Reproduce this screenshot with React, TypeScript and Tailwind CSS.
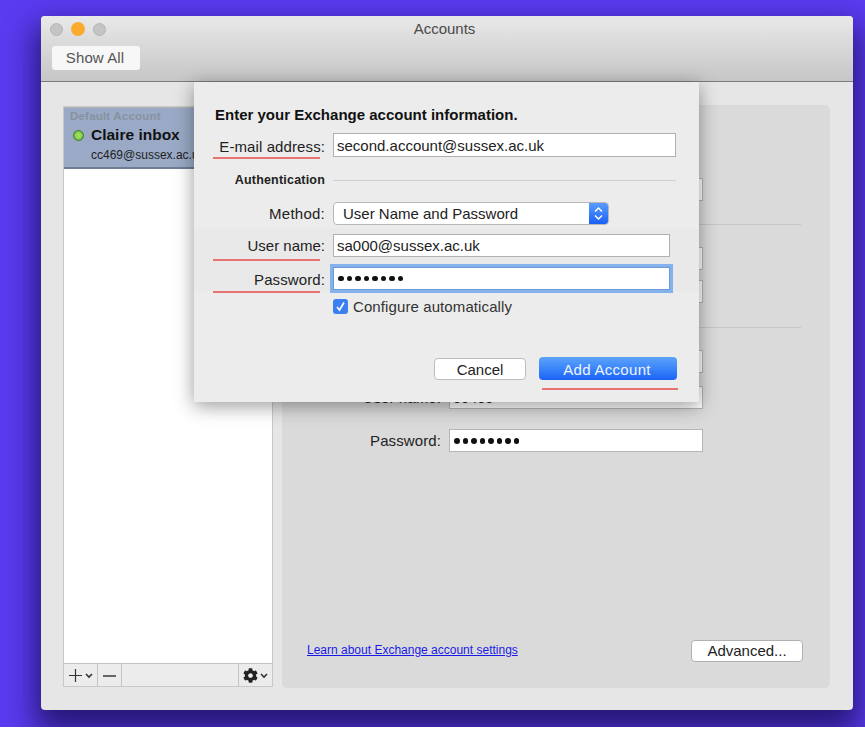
import { FaCog } from "react-icons/fa";

const font = "font-['Liberation_Sans',Arial,sans-serif]";

function BgField({ label, value, dots }: { label?: string; value?: string; dots?: boolean }) {
  return (
    <div className="flex items-center h-[23px]">
      <div className="w-[167px] pr-[8px] pt-[2px] text-right text-[15px] tracking-[0.1px] text-[#222] whitespace-nowrap">{label}</div>
      <div className="w-[254px] h-[23px] bg-white border border-[#b5b5b5] pl-[3px] pt-[1px] flex items-center text-[14.5px] text-[#222] leading-none">
        {dots ? <Dots /> : value}
      </div>
    </div>
  );
}

function Dots() {
  return (
    <span className="flex gap-[3px] pl-[1px]">
      {[0, 1, 2, 3, 4, 5, 6, 7].map((i) => (
        <span key={i} className="w-[5.5px] h-[5.5px] rounded-full bg-[#111]" />
      ))}
    </span>
  );
}

function RedLine({ className }: { className: string }) {
  return <div className={"absolute h-[2px] bg-[#e77272] " + className} />;
}

function Dialog() {
  return (
    <div className="absolute left-[153px] top-[66px] w-[505px] h-[320px] bg-[#ececec] shadow-[0_4px_18px_rgba(0,0,0,0.4)] flex flex-col">
      <div className="pl-[21px] pt-[24px] h-[51px] text-[15px] font-bold text-[#111] leading-[18px]">
        Enter your Exchange account information.
      </div>
      <div className="flex items-center h-[24px]">
        <div className="w-[131px] pt-[2px] text-right text-[15px] tracking-[0.1px] text-[#222] leading-none whitespace-nowrap">E-mail address:</div>
        <div className="ml-[8px] w-[343px] h-[24px] bg-white border border-[#b0b0b0] pl-[3px] pt-[3px] flex items-center text-[15px] text-[#222]">
          second.account@sussex.ac.uk
        </div>
      </div>
      <div className="flex items-center h-[22px] mt-[12px]">
        <div className="w-[131px] text-right text-[12.5px] font-bold text-[#222] tracking-[0.2px]">Authentication</div>
        <div className="ml-[8px] w-[343px] h-px bg-[#cfcfcf]" />
      </div>
      <div className="flex items-center h-[23px] mt-[11px]">
        <div className="w-[131px] pt-[2px] text-right text-[15px] tracking-[0.25px] text-[#222]">Method:</div>
        <div className="ml-[8px] w-[276px] h-[23px] flex rounded-[4px] bg-white border border-[#b8b8b8] overflow-hidden">
          <div className="flex-1 pl-[9px] pt-[1px] flex items-center text-[15px] text-[#222]">User Name and Password</div>
          <div className="w-[19px] bg-gradient-to-b from-[#5a9cfb] to-[#1a5ff5] flex items-center justify-center">
            <svg width="9" height="15" viewBox="0 0 9 15" fill="none" stroke="#fff" strokeWidth="1.5">
              <path d="M1 5.5 4.5 2 8 5.5M1 9.5 4.5 13 8 9.5" />
            </svg>
          </div>
        </div>
      </div>
      <div className="bg-[#e9e9e9] mt-[3px] h-[64px] pt-[6px]">
        <div className="flex items-center h-[23px]">
          <div className="w-[131px] pt-[2px] text-right text-[15px] text-[#222]">User name:</div>
          <div className="ml-[8px] w-[337px] h-[23px] bg-white border border-[#b0b0b0] pl-[3px] pt-[2px] flex items-center text-[15px] text-[#222]">
            sa000@sussex.ac.uk
          </div>
        </div>
        <div className="flex items-center h-[23px] mt-[10px]">
          <div className="w-[131px] pt-[3px] text-right text-[15px] tracking-[0.1px] text-[#222]">Password:</div>
          <div className="ml-[8px] w-[337px] h-[23px] bg-white border border-[#6d9bd6] shadow-[0_0_0_3px_#84b2ec] pl-[3px] flex items-center">
            <Dots />
          </div>
        </div>
      </div>
      <div className="flex items-center h-[18px] mt-[5px] ml-[139px]">
        <div className="w-[15px] h-[15px] rounded-[3px] bg-[#3b7ff0] flex items-center justify-center">
          <svg width="11" height="11" viewBox="0 0 11 11" fill="none" stroke="#fff" strokeWidth="1.6">
            <path d="M2 6 4.5 9 9 1.5" />
          </svg>
        </div>
        <span className="ml-[5px] pt-[2px] text-[15px] tracking-[0.1px] text-[#333]">Configure automatically</span>
      </div>
      <div className="flex justify-end items-end h-[23px] mt-[42px] pr-[22px] gap-[13px]">
        <div className="w-[92px] h-[22px] rounded-[4px] bg-white border border-[#bdbdbd] pt-[2px] flex items-center justify-center text-[15px] text-[#222]">
          Cancel
        </div>
        <div className="w-[138px] h-[23px] rounded-[4px] bg-gradient-to-b from-[#5da3fb] to-[#1a63f6] pt-[4px] pr-[2px] flex items-center justify-center text-[15px] tracking-[0.3px] text-[#eef4ff]">
          Add Account
        </div>
      </div>
      <RedLine className="left-[19px] top-[75px] w-[107px]" />
      <RedLine className="left-[19px] top-[177px] w-[107px]" />
      <RedLine className="left-[19px] top-[209px] w-[107px]" />
      <RedLine className="left-[348px] top-[306px] w-[136px]" />
    </div>
  );
}

export default function App() {
  return (
    <div className={"relative w-[865px] h-[729px] overflow-hidden bg-white " + font}>
      <div className="h-[727px] overflow-hidden bg-[#5b3bf0] pl-[41px] pt-[16px]">
        <div className="relative w-[812px] h-[694px] rounded-[4px] bg-[#e6e6e6] shadow-[0_16px_30px_6px_rgba(20,10,70,0.72)] flex flex-col overflow-hidden">
          <div className="h-[66px] shrink-0 bg-gradient-to-b from-[#e9e9e9] to-[#c6c6c6] border-b border-[#7c7c7c] relative">
            <div className="flex items-center gap-[8px] pl-[9px] pt-[6px]">
              <div className="w-[13px] h-[13px] rounded-full bg-[#c4c4c4] border border-[#b4b4b4]" />
              <div className="w-[14px] h-[14px] rounded-full bg-[#fbab2c]" />
              <div className="w-[13px] h-[13px] rounded-full bg-[#c4c4c4] border border-[#b4b4b4]" />
            </div>
            <div className="absolute left-0 right-0 top-[2px] pr-[5px] text-center text-[15px] text-[#4a4a4a]">Accounts</div>
            <div className="ml-[11px] mt-[10px] w-[88px] h-[24px] rounded-[3px] bg-[#f7f7f7] pr-[2px] flex items-center justify-center text-[15px] tracking-[0.1px] text-[#555]">
              Show All
            </div>
          </div>
          <div className="flex-1 flex pl-[22px] pt-[23px] min-h-0">
            <div className="w-[210px] h-[581px] mt-[1px] bg-white flex flex-col border border-[#c8c8c8]">
              <div className="h-[62px] bg-[#9aaac6] border-t border-[#b5b5b5] border-b-2 border-b-[#6f7c94] pl-[6px] pt-[2px]">
                <div className="text-[11.5px] font-bold text-[#88919f] leading-[13px] tracking-[0.2px]">Default Account</div>
                <div className="flex items-center mt-[2px]">
                  <div className="w-[11px] h-[11px] ml-[3px] rounded-full bg-[radial-gradient(circle,#9bdb55_35%,#4a9a35_100%)] border border-[#3f7f30]" />
                  <span className="ml-[7px] text-[15.5px] font-bold text-[#111] leading-[20px]">Claire inbox</span>
                </div>
                <div className="ml-[21px] mt-[3px] text-[12px] leading-[14px] text-[#222] whitespace-nowrap">cc469@sussex.ac.uk</div>
              </div>
              <div className="flex-1" />
              <div className="h-[23px] bg-[#ececec] border-t border-[#c4c4c4] flex items-stretch">
                <div className="w-[34px] border-r border-[#c4c4c4] flex items-center justify-center gap-[3px] pt-[1px]">
                  <svg width="13" height="13" viewBox="0 0 13 13" stroke="#333" strokeWidth="1.2"><path d="M6.5 0v13M0 6.5h13" /></svg>
                  <svg width="8" height="6" viewBox="0 0 8 6" fill="none" stroke="#333" strokeWidth="1.6"><path d="M1 1l3 3 3-3" /></svg>
                </div>
                <div className="w-[24px] border-r border-[#c4c4c4] flex items-center justify-center pt-[1px]">
                  <div className="w-[13px] h-[2px] bg-[#666]" />
                </div>
                <div className="flex-1" />
                <div className="w-[34px] border-l border-[#c4c4c4] flex items-center justify-center gap-[2px] pt-[1px]">
                  <FaCog className="text-[#222] text-[15px]" />
                  <svg width="8" height="6" viewBox="0 0 8 6" fill="none" stroke="#333" strokeWidth="1.6"><path d="M1 1l3 3 3-3" /></svg>
                </div>
              </div>
            </div>
            <div className="ml-[9px] w-[548px] h-[583px] rounded-[5px] bg-[#dadada] flex flex-col pt-[73px] text-[#222]">
              <BgField value="" />
              <div className="ml-[19px] mt-[23px] w-[500px] h-px bg-[#c6c6c6]" />
              <div className="mt-[22px]"><BgField value="" /></div>
              <div className="mt-[10px]"><BgField value="" /></div>
              <div className="ml-[19px] mt-[24px] w-[500px] h-px bg-[#c6c6c6]" />
              <div className="mt-[22px]"><BgField value="" /></div>
              <div className="mt-[13px]"><BgField label="User name:" value="00400" /></div>
              <div className="mt-[20px]"><BgField label="Password:" dots /></div>
              <div className="flex-1" />
              <div className="flex items-center justify-between pl-[25px] pr-[27px] pb-[26px]">
                <span className="text-[12px] text-[#1a1ae6] underline -mt-[2px]">Learn about Exchange account settings</span>
                <div className="w-[112px] h-[22px] rounded-[4px] bg-white border border-[#b0b0b0] flex items-center justify-center text-[15px] text-[#222]">
                  Advanced...
                </div>
              </div>
            </div>
          </div>
          <Dialog />
        </div>
      </div>
    </div>
  );
}
